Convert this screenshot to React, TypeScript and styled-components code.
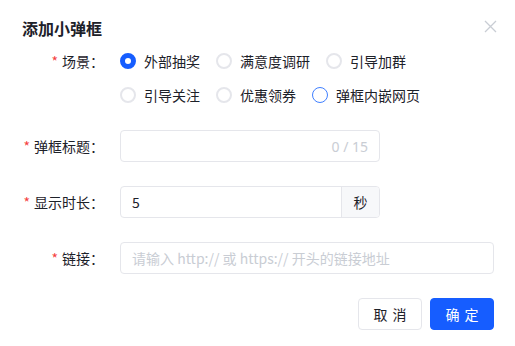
import React from 'react';
import styled, { createGlobalStyle, css } from 'styled-components';

const Global = createGlobalStyle`
  html, body {
    margin: 0;
    padding: 0;
    background: #fff;
  }
  body {
    font-family: "Noto Sans CJK SC", "Noto Sans", sans-serif;
    color: #1d2129;
  }
`;

const Dialog = styled.div`
  position: relative;
  width: 515px;
  height: 346px;
  box-sizing: border-box;
  padding: 16px 21px 0 22px;
  background: #fff;
`;

const Title = styled.div`
  font-size: 16px;
  font-weight: 700;
  line-height: 24px;
  color: #1d2129;
`;

const Close = styled.button`
  position: absolute;
  top: 18px;
  right: 17px;
  width: 16px;
  height: 16px;
  padding: 0;
  border: none;
  background: none;
  cursor: pointer;
  display: flex;
  align-items: center;
  justify-content: center;
`;

const Form = styled.div`
  display: flex;
  flex-direction: column;
  margin-top: 5px;
`;

const Row = styled.div<{ $mb: number }>`
  display: flex;
  align-items: flex-start;
  margin-bottom: ${(p) => p.$mb}px;
`;

const Label = styled.div`
  width: 82px;
  flex: none;
  margin-right: 16px;
  height: 32px;
  line-height: 32px;
  font-size: 14px;
  text-align: right;
  white-space: nowrap;
  color: #1d2129;
`;

const Star = styled.span`
  color: #f53f3f;
  margin-right: 4px;
`;

const RadioGroup = styled.div`
  flex: 1;
  display: flex;
  flex-wrap: wrap;
  column-gap: 16px;
  row-gap: 2px;
`;

const RadioItem = styled.label`
  display: flex;
  align-items: center;
  gap: 8px;
  height: 32px;
  font-size: 14px;
  color: #1d2129;
  cursor: pointer;
`;

const Circle = styled.span<{ $state: 'on' | 'off' | 'hover' }>`
  width: 16px;
  height: 16px;
  box-sizing: border-box;
  border-radius: 50%;
  background: #fff;
  ${(p) =>
    p.$state === 'on'
      ? css`
          border: 5px solid #165dff;
        `
      : p.$state === 'hover'
      ? css`
          border: 1.5px solid #4080ff;
        `
      : css`
          border: 2px solid #e5e6eb;
        `}
`;

const InputBox = styled.div<{ $w: number }>`
  width: ${(p) => p.$w}px;
  height: 32px;
  box-sizing: border-box;
  display: flex;
  align-items: stretch;
  border: 1px solid #e5e6eb;
  border-radius: 4px;
  overflow: hidden;
  font-size: 14px;
`;

const Field = styled.div<{ $placeholder?: boolean }>`
  flex: 1;
  display: flex;
  align-items: center;
  padding: 0 11px;
  color: ${(p) => (p.$placeholder ? '#c9cdd4' : '#1d2129')};
  white-space: nowrap;
`;

const Counter = styled.span`
  margin-left: auto;
  color: #c9cdd4;
  font-family: "Noto Sans", sans-serif;
`;

const Addon = styled.div`
  width: 37px;
  border-left: 1px solid #e5e6eb;
  background: #f7f8fa;
  display: flex;
  align-items: center;
  justify-content: center;
  color: #1d2129;
`;

const Footer = styled.div`
  display: flex;
  justify-content: flex-end;
  gap: 8px;
`;

const Button = styled.button<{ $primary?: boolean }>`
  width: 64px;
  height: 32px;
  box-sizing: border-box;
  border-radius: 4px;
  font-family: inherit;
  font-size: 14px;
  letter-spacing: 5px;
  padding: 0 0 0 5px;
  cursor: pointer;
  ${(p) =>
    p.$primary
      ? css`
          background: #165dff;
          border: 1px solid #165dff;
          color: #fff;
        `
      : css`
          background: #fff;
          border: 1px solid #e5e6eb;
          color: #1d2129;
        `}
`;

const scenes: { label: string; state: 'on' | 'off' | 'hover' }[] = [
  { label: '外部抽奖', state: 'on' },
  { label: '满意度调研', state: 'off' },
  { label: '引导加群', state: 'off' },
  { label: '引导关注', state: 'off' },
  { label: '优惠领券', state: 'off' },
  { label: '弹框内嵌网页', state: 'hover' },
];

export default function App() {
  return (
    <Dialog>
      <Global />
      <Title>添加小弹框</Title>
      <Close aria-label="关闭">
        <svg width="13" height="13" viewBox="0 0 13 13">
          <path d="M1 1L12 12M12 1L1 12" stroke="#c9cdd4" strokeWidth="1.3" fill="none" />
        </svg>
      </Close>
      <Form>
        <Row $mb={19}>
          <Label>
            <Star>*</Star>场景：
          </Label>
          <RadioGroup>
            {scenes.map((s) => (
              <RadioItem key={s.label}>
                <Circle $state={s.state} />
                {s.label}
              </RadioItem>
            ))}
          </RadioGroup>
        </Row>
        <Row $mb={24}>
          <Label>
            <Star>*</Star>弹框标题：
          </Label>
          <InputBox $w={260}>
            <Field>
              <Counter>0 / 15</Counter>
            </Field>
          </InputBox>
        </Row>
        <Row $mb={24}>
          <Label>
            <Star>*</Star>显示时长：
          </Label>
          <InputBox $w={260}>
            <Field>5</Field>
            <Addon>秒</Addon>
          </InputBox>
        </Row>
        <Row $mb={24}>
          <Label>
            <Star>*</Star>链接：
          </Label>
          <InputBox $w={374}>
            <Field $placeholder>请输入 http:// 或 https:// 开头的链接地址</Field>
          </InputBox>
        </Row>
      </Form>
      <Footer>
        <Button>取消</Button>
        <Button $primary>确定</Button>
      </Footer>
    </Dialog>
  );
}
